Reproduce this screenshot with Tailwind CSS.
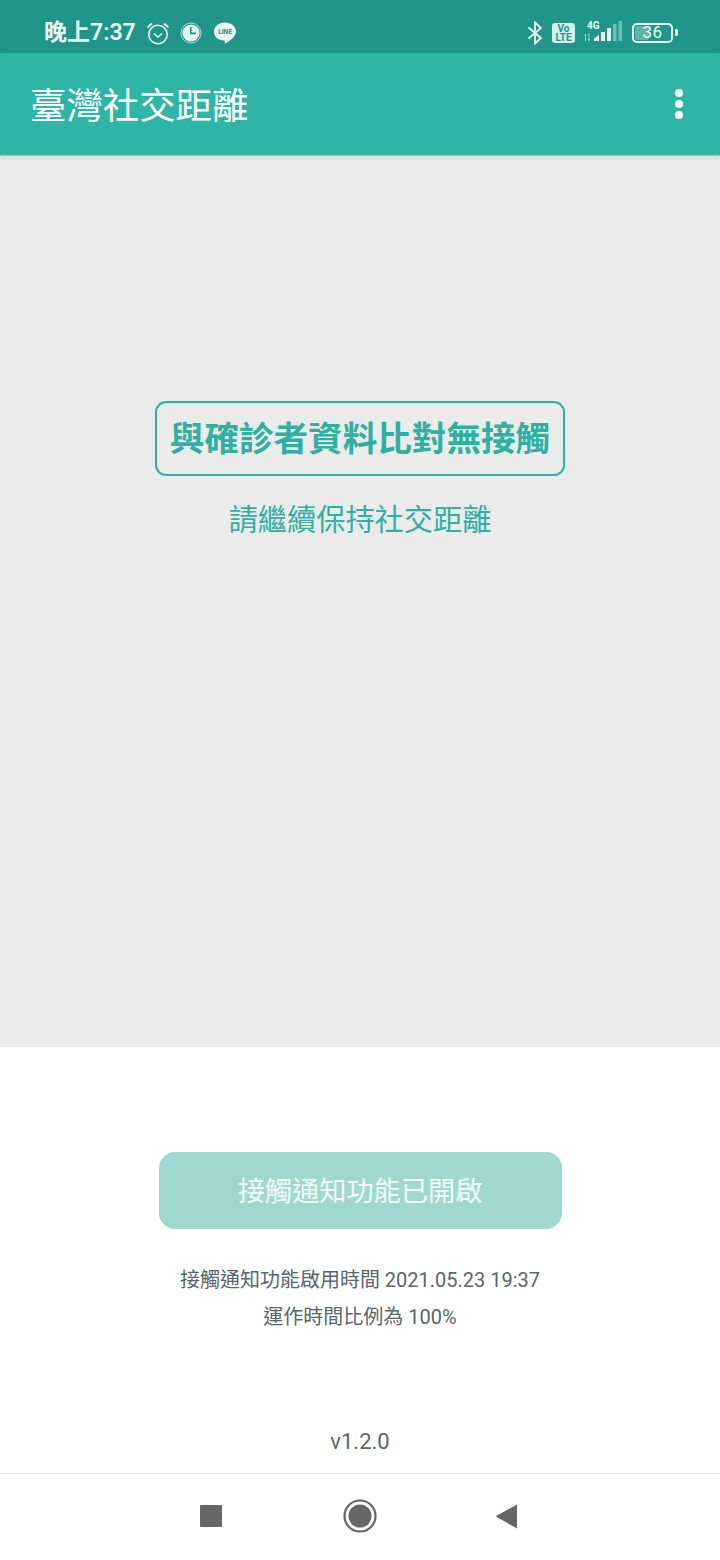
<!doctype html>
<html lang="zh-Hant"><head><meta charset="utf-8">
<script src="https://cdn.jsdelivr.net/npm/@tailwindcss/browser@4"></script>
</head>
<body class="m-0">
<div class="w-[720px] h-[1560px] flex flex-col bg-white overflow-hidden font-['Roboto','Noto_Sans_CJK_TC',sans-serif]">
  <!-- status bar -->
  <div class="h-[53px] shrink-0 bg-[#1f9689] flex items-center justify-between pl-[44px] pr-[42px] pt-[12px] text-[#e8f6f4]">
    <div class="flex items-center">
      <span class="text-[23px] font-semibold leading-none w-[91px] whitespace-nowrap">晚上7:37</span>
      <svg class="ml-[11px]" width="24" height="24" viewBox="0 0 24 24" fill="none" stroke="#e8f6f4"><circle cx="12" cy="13.5" r="9.2" stroke-width="1.6"/><path d="M8 12.5l4 3.5 4-3.5" stroke-width="1.6"/><path d="M1.5 6.5 6 2.5M22.5 6.5 18 2.5" stroke-width="1.8"/></svg>
      <svg class="ml-[10px]" width="22" height="22" viewBox="0 0 22 22"><circle cx="11" cy="11" r="10" fill="none" stroke="#e8f6f4" stroke-width=".7"/><circle cx="11" cy="11" r="8.6" fill="#e8f6f4"/><path d="M10.8 5v6.4h5.2" fill="none" stroke="#1f9689" stroke-width="1.6"/></svg>
      <svg class="ml-[11px]" width="24" height="24" viewBox="0 0 24 24"><path d="M12 1.5c6.2 0 11 3.900 11 9 0 3.500-2.500 6-5 8-2 1.600-4.500 3.500-5.600 4-.8.3-.6-.9-.5-1.800.1-.7-.4-1-1-1.200C5.500 19.800 1 16 1 10.500c0-5.100 4.800-9 11-9z" fill="#e8f6f4"/><text x="12" y="13.200" text-anchor="middle" font-size="6.500" font-weight="800" fill="#1f9689" font-family="Roboto">LINE</text></svg>
    </div>
    <div class="flex items-center">
      <svg width="16" height="24" viewBox="0 0 16 24" fill="none" stroke="#e8f6f4" stroke-width="1.800"><path d="M1.500 6.500 14 17l-6 5.500V1.500L14 7 1.500 17.500"/></svg>
      <div class="ml-[9px] w-[23px] h-[20px] rounded-[3px] bg-[#d5eeeb] text-[#1f9689] text-[10px] font-bold leading-[9px] flex flex-col items-center justify-center"><span>Vo</span><span>LTE</span></div>
      <div class="ml-[9px] relative w-[38px] h-[24px]">
        <span class="absolute left-[3px] -top-[1px] text-[10px] font-bold leading-[12px] text-[#e8f6f4]">4G</span>
        <svg class="absolute left-0 top-0" width="38" height="24" viewBox="0 0 38 24"><path d="M1.500 13v7M1 14.500l.5-1.500.5 1.500M5 12.500v7M4.500 18l.5 1.500.5-1.500" stroke="#a9dcd6" stroke-width=".9" fill="none"/><path d="M10 20v-2.500L15 14v6z" fill="#e8f6f4"/><rect x="17" y="11" width="4" height="9" fill="#e8f6f4"/><rect x="23" y="7" width="4" height="13" fill="#e8f6f4"/><rect x="29" y="3" width="3.500" height="17" fill="#6cbfb5"/><rect x="34.500" y="0" width="3.500" height="20" fill="#6cbfb5"/></svg>
      </div>
      <div class="ml-[10px] relative w-[41px] h-[20px] border-[2px] border-[#e8f6f4] rounded-[5px] flex items-center justify-center overflow-hidden">
        <div class="absolute left-[1px] top-[1px] bottom-[1px] w-[14px] bg-[#5fb5aa] rounded-[2px]"></div>
        <span class="relative text-[17px] leading-none text-[#e8f6f4] tracking-[0.5px]">36</span>
      </div>
      <div class="ml-[2px] w-[3px] h-[7px] bg-[#e8f6f4] rounded-r-[2px]"></div>
    </div>
  </div>
  <!-- app bar -->
  <div class="relative z-10 h-[103px] shrink-0 bg-[#2fb5a5] flex items-center justify-between pl-[30px] pr-[37px] border-b border-[#7fcfc5] shadow-[0_2px_4px_rgba(0,0,0,0.1)]">
    <h1 class="text-[36.400px] font-normal leading-none text-white mt-[6px]">臺灣社交距離</h1>
    <div class="flex flex-col gap-[3px]">
      <div class="w-[8px] h-[8px] rounded-full bg-white"></div>
      <div class="w-[8px] h-[8px] rounded-full bg-white"></div>
      <div class="w-[8px] h-[8px] rounded-full bg-white"></div>
    </div>
  </div>
  <!-- status area -->
  <div class="h-[891px] shrink-0 bg-[#ebebeb] flex flex-col items-center pt-[245px]">
    <div class="w-[410px] h-[75px] border-2 border-[#2fb0a2] rounded-[11px] flex items-center justify-center pt-[2px]">
      <span class="text-[34.600px] font-bold leading-none text-[#2fb0a2] whitespace-nowrap">與確診者資料比對無接觸</span>
    </div>
    <p class="mt-[26px] text-[29.200px] leading-[36px] text-[#2fb0a2] whitespace-nowrap">請繼續保持社交距離</p>
  </div>
  <!-- lower area -->
  <div class="flex-1 flex flex-col items-center pt-[105px]">
    <div class="w-[403px] h-[77px] rounded-[16px] bg-[#a0d8d1] flex items-center justify-center text-[27.200px] leading-none text-[#f0faf8] pt-[5px]">接觸通知功能已開啟</div>
    <p class="mt-[33px] text-[20px] leading-[37px] text-[#59666a] text-center whitespace-nowrap">接觸通知功能啟用時間 2021.05.23 19:37<br>運作時間比例為 100%</p>
    <p class="mt-[93px] text-[22px] leading-[26px] text-[#59666a]">v1.2.0</p>
  </div>
  <!-- nav bar -->
  <div class="h-[87px] shrink-0 border-t border-[#e6e6e6] bg-white flex items-start justify-between pl-[200px] pr-[202px] pt-[25px]">
    <svg class="mt-[6px]" width="22" height="22" viewBox="0 0 22 22"><rect x="0" y="0" width="22" height="22" rx="1" fill="#666"/></svg>
    <svg class="ml-[2px]" width="34" height="34" viewBox="0 0 34 34"><circle cx="17" cy="17" r="15.500" fill="none" stroke="#666" stroke-width="2.200"/><circle cx="17" cy="17" r="11.500" fill="#666"/></svg>
    <svg class="mt-[5px]" width="22" height="25" viewBox="0 0 22 25"><path d="M21 .5v24L1 13.200a1 1 0 0 1 0-1.700z" fill="#666"/></svg>
  </div>
</div>
</body></html>
